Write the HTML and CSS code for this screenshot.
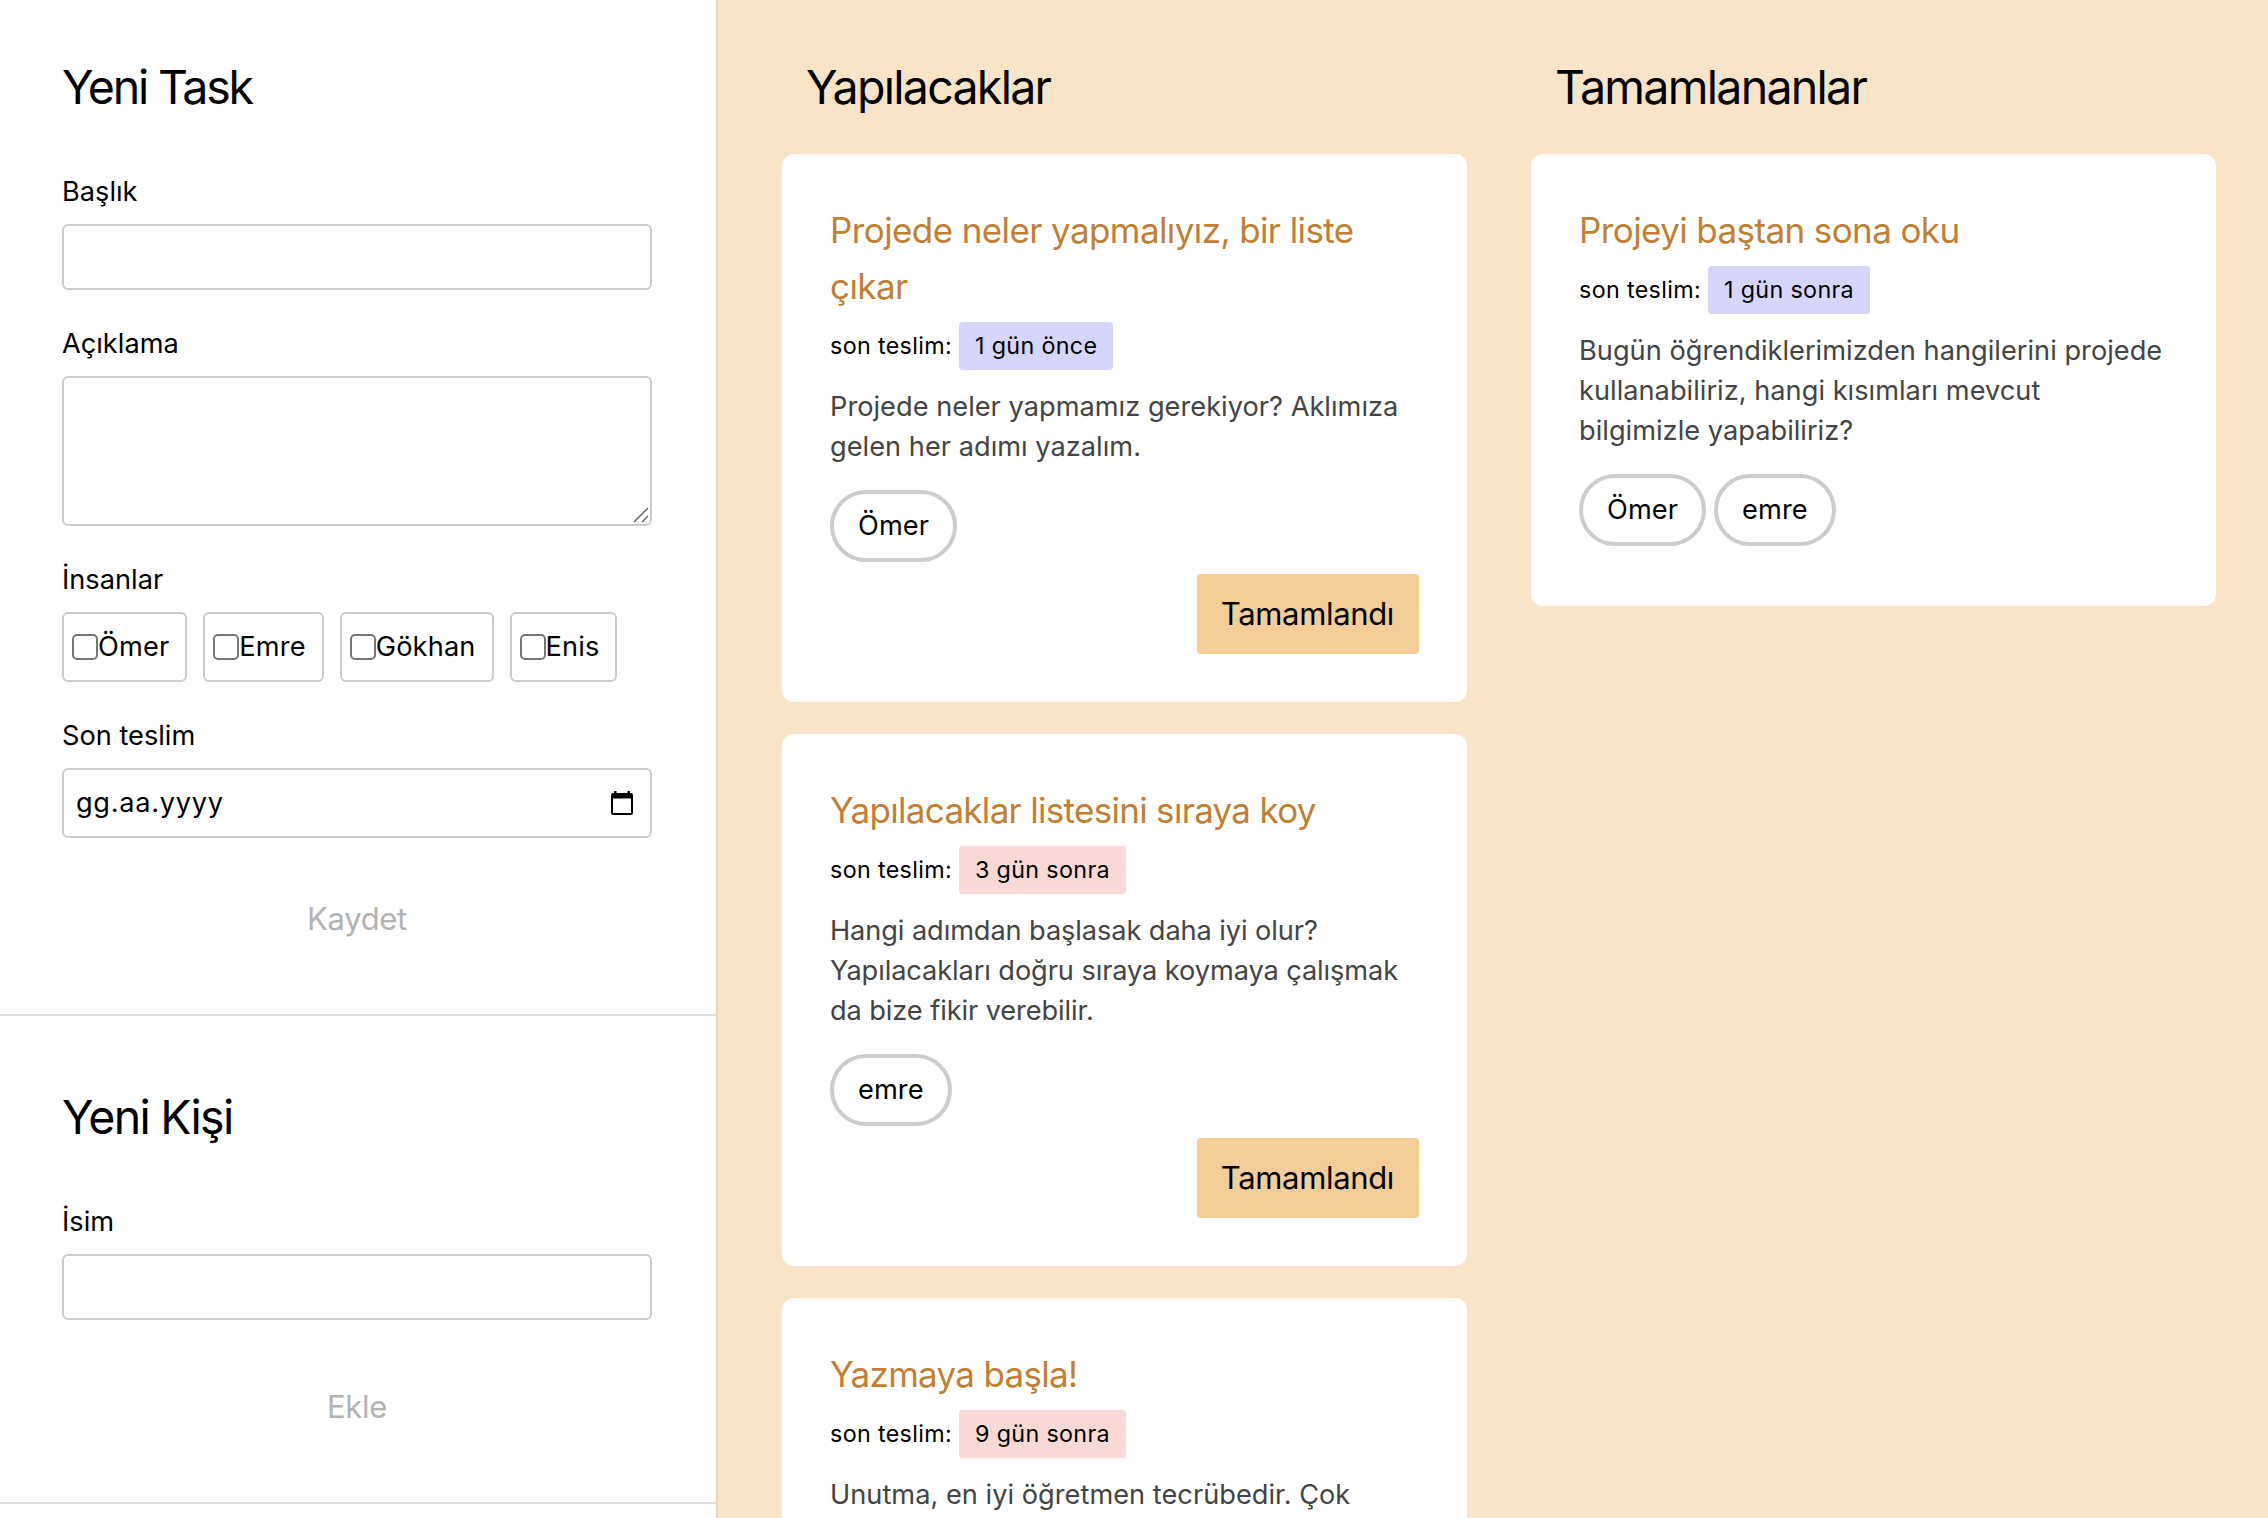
FILE: index.html
```html
<!DOCTYPE html>
<html lang="tr">
<head>
<meta charset="utf-8">
<title>Yapılacaklar</title>
<link rel="stylesheet" href="styles.css">
</head>
<body>
<div class="app">
  <aside class="sidebar">
    <form class="panel">
      <h2 class="heading heading-task">Yeni Task</h2>
      <div class="field">
        <label class="label" for="title">Başlık</label>
        <input class="input" id="title" type="text">
      </div>
      <div class="field">
        <label class="label" for="description">Açıklama</label>
        <div class="textarea-wrap">
          <textarea class="input textarea" id="description"></textarea>
          <svg class="grip" viewBox="0 0 16 16" width="16" height="16"><path d="M1 15L15 1M9 15L15 9" fill="none" stroke="#666" stroke-width="1.5"/></svg>
        </div>
      </div>
      <div class="field">
        <span class="label">İnsanlar</span>
        <div class="people">
          <label class="person"><input class="check" type="checkbox">Ömer</label>
          <label class="person"><input class="check" type="checkbox">Emre</label>
          <label class="person"><input class="check" type="checkbox">Gökhan</label>
          <label class="person"><input class="check" type="checkbox">Enis</label>
        </div>
      </div>
      <div class="field">
        <span class="label">Son teslim</span>
        <div class="input date">
          <span>gg.aa.yyyy</span>
          <svg viewBox="0 0 22 24" width="22" height="24"><path fill-rule="evenodd" d="M3 0h2.5v2h11V0H19v2h1a2 2 0 0 1 2 2v18a2 2 0 0 1-2 2H2a2 2 0 0 1-2-2V4a2 2 0 0 1 2-2h1zM2 7.500V22h18V7.500z"/></svg>
        </div>
      </div>
      <button class="submit" type="button" disabled>Kaydet</button>
    </form>
    <form class="panel panel-person">
      <h2 class="heading">Yeni Kişi</h2>
      <div class="field">
        <label class="label" for="name">İsim</label>
        <input class="input" id="name" type="text">
      </div>
      <button class="submit" type="button" disabled>Ekle</button>
    </form>
  </aside>
  <main class="board">
    <section class="column">
      <h2 class="heading">Yapılacaklar</h2>
      <article class="card">
        <h3 class="card-title">Projede neler yapmalıyız, bir liste çıkar</h3>
        <div class="due">son teslim: <span class="tag">1 gün önce</span></div>
        <p class="text">Projede neler yapmamız gerekiyor? Aklımıza gelen her adımı yazalım.</p>
        <div class="assignees"><span class="pill">Ömer</span></div>
        <button class="done" type="button">Tamamlandı</button>
      </article>
      <article class="card">
        <h3 class="card-title tight">Yapılacaklar listesini sıraya koy</h3>
        <div class="due">son teslim: <span class="tag late">3 gün sonra</span></div>
        <p class="text text-tight">Hangi adımdan başlasak daha iyi olur? Yapılacakları doğru sıraya koymaya çalışmak da bize fikir verebilir.</p>
        <div class="assignees"><span class="pill">emre</span></div>
        <button class="done" type="button">Tamamlandı</button>
      </article>
      <article class="card">
        <h3 class="card-title tight">Yazmaya başla!</h3>
        <div class="due">son teslim: <span class="tag late">9 gün sonra</span></div>
        <p class="text">Unutma, en iyi öğretmen tecrübedir. Çok</p>
      </article>
    </section>
    <section class="column">
      <h2 class="heading">Tamamlananlar</h2>
      <article class="card">
        <h3 class="card-title">Projeyi baştan sona oku</h3>
        <div class="due">son teslim: <span class="tag">1 gün sonra</span></div>
        <p class="text">Bugün öğrendiklerimizden hangilerini projede kullanabiliriz, hangi kısımları mevcut bilgimizle yapabiliriz?</p>
        <div class="assignees"><span class="pill">Ömer</span><span class="pill">emre</span></div>
      </article>
    </section>
  </main>
</div>
</body>
</html>
```
FILE: styles.css
```css
* {
  box-sizing: border-box;
}

body {
  margin: 0;
  font-family: Inter, "Liberation Sans", sans-serif;
  font-size: 27.2px;
  line-height: 40px;
  color: #000;
  background: #fae4c8;
}

button,
input,
textarea {
  font: inherit;
  color: inherit;
}

.app {
  display: flex;
  height: 1518px;
  overflow: hidden;
}

.sidebar {
  flex: none;
  width: 718px;
  background: #fff;
  border-right: 2px solid #efd4b2;
}

.heading {
  margin: 0;
  font-size: 46.5px;
  font-weight: 400;
  line-height: 72px;
  letter-spacing: -1.72px;
}

.heading-task {
  letter-spacing: -2.2px;
}

.panel {
  display: flex;
  flex-direction: column;
  padding: 51px 64px 55px 62px;
  border-bottom: 2px solid #ddd;
}

.panel .heading {
  margin-bottom: 47px;
}

.panel-person {
  padding-top: 65px;
}

.field {
  display: flex;
  flex-direction: column;
  gap: 11px;
}

.field + .field {
  margin-top: 32px;
}

.label {
  padding-top: 1px;
  line-height: 42px;
}

.input {
  display: block;
  width: 100%;
  height: 66px;
  margin: 0;
  padding: 0 12px;
  background: #fff;
  border: 2px solid #ccc;
  border-radius: 6px;
  outline: none;
}

.textarea-wrap {
  position: relative;
}

.textarea {
  height: 150px;
  resize: none;
}

.grip {
  position: absolute;
  right: 3px;
  bottom: 3px;
}

.people {
  display: flex;
  gap: 16px;
}

.person {
  display: flex;
  align-items: center;
  height: 70px;
  padding: 0 16px 0 8px;
  border: 2px solid #ccc;
  border-radius: 6px;
  letter-spacing: 0.15px;
}

.check {
  appearance: none;
  width: 26px;
  height: 26px;
  margin: 0;
  border: 2px solid #767676;
  border-radius: 5px;
}

.date {
  display: flex;
  align-items: center;
  justify-content: space-between;
  height: 70px;
  padding-right: 17px;
  letter-spacing: 0.7px;
}

.submit {
  height: 80px;
  margin-top: 41px;
  padding: 0;
  border: 0;
  background: none;
  color: #b3b3b3;
  font-size: 31px;
  letter-spacing: -0.34px;
}

.panel-person .submit {
  margin-top: 47px;
}

.board {
  display: flex;
  gap: 64px;
  padding: 51px 52px 0 64px;
}

.column {
  width: 685px;
}

.column .heading {
  margin: 0 24px 31px;
}

.card {
  display: flex;
  flex-direction: column;
  padding: 48px;
  background: #fff;
  border-radius: 12px;
}

.card + .card {
  margin-top: 32px;
}

.card-title {
  margin: 0;
  color: #c07f35;
  font-size: 35px;
  font-weight: 400;
  line-height: 56px;
  letter-spacing: -0.6px;
}

.tight {
  letter-spacing: -0.7px;
}

.due {
  display: flex;
  align-items: center;
  gap: 7px;
  margin-top: 8px;
  font-size: 23.3px;
  line-height: 48px;
  letter-spacing: 0.34px;
}

.tag {
  padding: 0 16px;
  background: #d6d6fd;
  border-radius: 4px;
}

.late {
  background: #f9d9d5;
}

.text {
  margin: 17px 0 23px;
  color: #444;
  letter-spacing: 0.02px;
}

.text-tight {
  letter-spacing: -0.09px;
}

.assignees {
  display: flex;
  gap: 8px;
  margin-bottom: 12px;
}

.pill {
  padding: 12px 24px;
  border: 4px solid #ccc;
  border-radius: 36px;
  letter-spacing: 0.1px;
}

.done {
  align-self: flex-end;
  height: 80px;
  padding: 0 25px 0 24px;
  border: 0;
  border-radius: 4px;
  background: #f5cd98;
  font-size: 31px;
  letter-spacing: -0.34px;
}
```
